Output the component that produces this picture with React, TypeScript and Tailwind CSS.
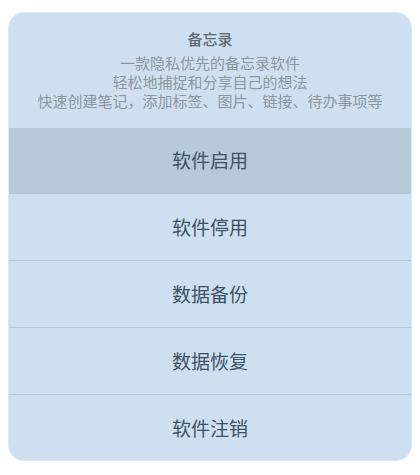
const items = ['软件启用', '软件停用', '数据备份', '数据恢复', '软件注销']

export default function App() {
  return (
    <div className="w-[420px] h-[475px] bg-white pt-[12px] pl-[8px] font-['Noto_Sans_CJK_SC','Noto_Sans',sans-serif]">
      <div className="w-[404px] h-[449px] rounded-[16px] border border-[#d2eafc] bg-[#cee0f0] overflow-hidden flex flex-col">
        <div className="h-[115px] shrink-0 flex flex-col items-center pt-[16px] text-center">
          <div className="text-[15px] leading-[20px] font-medium text-[#5d6870]">备忘录</div>
          <div className="mt-[4px] text-[15px] leading-[19px] text-[#8c969e]">
            <p>一款隐私优先的备忘录软件</p>
            <p>轻松地捕捉和分享自己的想法</p>
            <p>快速创建笔记，添加标签、图片、链接、待办事项等</p>
          </div>
        </div>
        {items.map((label, i) => (
          <div
            key={label}
            className={
              i === 0
                ? 'h-[65px] shrink-0 flex items-center justify-center bg-[#b8cad9] text-[19px] text-[#3d5165]'
                : 'h-[67px] shrink-0 flex items-center justify-center border-t border-[#b6c9d8] text-[19px] text-[#3d5165]'
            }
          >
            {label}
          </div>
        ))}
      </div>
    </div>
  )
}
